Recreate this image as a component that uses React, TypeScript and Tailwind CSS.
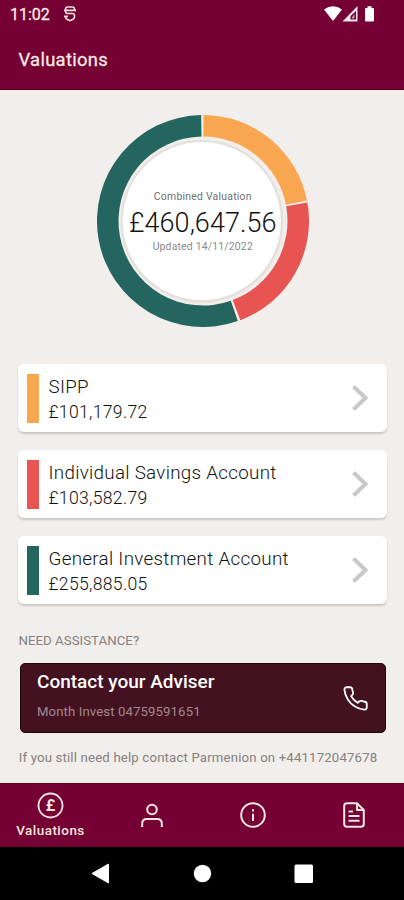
import React from "react";

const CX = 106;
const CY = 106;

function point(deg: number, r: number) {
  const a = (deg * Math.PI) / 180;
  return `${(CX + r * Math.sin(a)).toFixed(2)} ${(CY - r * Math.cos(a)).toFixed(2)}`;
}

function arc(from: number, to: number) {
  const large = to - from > 180 ? 1 : 0;
  return `M${point(from, 106)} A106 106 0 ${large} 1 ${point(to, 106)} L${point(to, 84.5)} A84.5 84.5 0 ${large} 0 ${point(from, 84.5)} Z`;
}

function Donut() {
  return (
    <div className="relative left-[0.8px] mx-auto mt-[24.5px] h-[212px] w-[212px]">
      <svg width="212" height="212" viewBox="0 0 212 212" className="block">
        <path d={arc(0.3, 78.9)} fill="#f9a650" />
        <path d={arc(79.9, 159.4)} fill="#e85452" />
        <path d={arc(160.8, 359)} fill="#24665f" />
        <circle cx="105" cy="106.3" r="81.5" fill="#e6e0dd" />
        <circle cx="104.8" cy="106" r="79" fill="#fff" />
      </svg>
      <div className="absolute inset-0 flex flex-col items-center whitespace-nowrap pt-[74px]">
        <div className="h-4 text-[10.4px] leading-4 tracking-[0.25px] text-[#707070]">Combined Valuation</div>
        <div className="mt-[2px] h-8 text-[27px] font-light leading-8 tracking-[0.05px] text-[#111]">£460,647.56</div>
        <div className="h-4 text-[10.4px] leading-4 tracking-[0.2px] text-[#8a8a8a]">Updated 14/11/2022</div>
      </div>
    </div>
  );
}

function Account({ name, value, color }: { name: string; value: string; color: string }) {
  return (
    <div className="flex h-[68px] items-center rounded-[6px] bg-white pl-[9px] pr-[18px] shadow-[0_2px_2px_rgba(0,0,0,0.16)]">
      <div className={`h-[49px] w-3 ${color}`} />
      <div className="ml-[9.5px] flex-1 whitespace-nowrap pt-[4px] font-light text-[#111]">
        <div className="h-[25px] text-[18.8px] leading-[25px] tracking-[0.3px]">{name}</div>
        <div className="h-[25px] text-[17.6px] leading-[25px] tracking-[0.3px]">{value}</div>
      </div>
      <svg width="17" height="28" viewBox="0 0 17 28" fill="none" stroke="#c8c8c8" strokeWidth="4">
        <path d="M1.5 2.5 13.5 14 1.5 25.5" />
      </svg>
    </div>
  );
}

export default function App() {
  return (
    <div className="flex h-[900px] w-[404px] flex-col overflow-hidden bg-[#f1eeeb] font-['Roboto',sans-serif]">
      <header className="h-[90px] shrink-0 border-b border-[#5a0012] bg-[#750034] text-[#f7e9e1]">
        <div className="flex h-7 items-center pl-[10px] pr-[29.5px]">
          <span className="mt-[2px] text-[16px] leading-5 [-webkit-text-stroke:0.3px]">11:02</span>
          <svg className="ml-[14px]" width="12" height="16" viewBox="0 0 12 16" fill="none" stroke="#f3dfdc" strokeWidth="1.6">
            <path d="M10.5 4V3.2Q10.5 1 8.3 1H3.7Q1.5 1 1.5 3.2V5.3Q1.5 7.5 3.7 7.5H8.3Q10.5 7.5 10.5 9.7V11Q10.5 12.5 9 13.2L6 14.7 3 13.2Q1.5 12.5 1.5 11M0 4.4H12M0 10.4H4" />
          </svg>
          <svg className="ml-auto" width="51" height="16" viewBox="0 0 51 16">
            <path d="M0 3.5Q9-3 18 3.5L9 15Z" fill="#fff" />
            <path d="M33.5 0V15.5H18.5Z" fill="#f6e6ea" />
            <path d="M32 5V13.5H26.5V10Z" fill="#750034" />
            <path d="M30.5 8V12.5H28V11Z" fill="#c390a4" />
            <path d="M42 2H43.5V.3H47.5V2H49Q50 2 50 3V14.5Q50 15.5 49 15.5H42Q41 15.5 41 14.5V3Q41 2 42 2Z" fill="#fff" />
          </svg>
        </div>
        <div className="ml-[18.5px] mt-[20px] text-[18.4px] leading-6 tracking-[0.3px] [-webkit-text-stroke:0.3px]">Valuations</div>
      </header>

      <main className="flex-1 px-[18px]">
        <Donut />
        <div className="mr-[-1px] mt-[37.5px] flex flex-col gap-[18px]">
          <Account name="SIPP" value="£101,179.72" color="bg-[#f9a650]" />
          <Account name="Individual Savings Account" value="£103,582.79" color="bg-[#e85452]" />
          <Account name="General Investment Account" value="£255,885.05" color="bg-[#24665f]" />
        </div>
        <div className="ml-[0.5px] mt-[27px] h-5 whitespace-nowrap text-[13.3px] leading-5 text-[#85817f]">NEED ASSISTANCE?</div>
        <div className="ml-[2px] mt-3 flex h-[70px] rounded-[5px] border border-[#1e0610] bg-[#43111f] pl-4 pr-[16px]">
          <div className="flex-1 whitespace-nowrap pt-[6px]">
            <div className="h-6 text-[19px] font-medium leading-6 text-white">Contact your Adviser</div>
            <div className="mt-[8px] h-5 text-[13.2px] leading-5 tracking-[0.1px] text-[#a18991]">Month Invest 04759591651</div>
          </div>
          <svg className="mt-[21px]" width="27" height="27" viewBox="0 0 24 24" fill="none" stroke="#fff" strokeWidth="1.6" strokeLinejoin="round">
            <path d="M22 16.92v3a2 2 0 0 1-2.18 2 19.79 19.79 0 0 1-8.63-3.07 19.5 19.5 0 0 1-6-6 19.79 19.79 0 0 1-3.07-8.67A2 2 0 0 1 4.11 2h3a2 2 0 0 1 2 1.72c.127.96.361 1.903.7 2.81a2 2 0 0 1-.45 2.11L8.09 9.91a16 16 0 0 0 6 6l1.27-1.27a2 2 0 0 1 2.11-.45c.907.339 1.85.573 2.81.7A2 2 0 0 1 22 16.92z" />
          </svg>
        </div>
        <div className="ml-[0.7px] mt-[15px] h-5 whitespace-nowrap text-[13.2px] leading-5 tracking-[0.17px] text-[#85817f]">
          If you still need help contact Parmenion on +441172047678
        </div>
      </main>

      <nav className="grid h-[64px] shrink-0 grid-cols-4 border-t border-[#5a0012] bg-[#750034] text-[#f9e7df]">
        <div className="flex flex-col items-center pt-2">
          <svg width="27" height="27" viewBox="0 0 27 27">
            <circle cx="13.5" cy="13.5" r="12" fill="none" stroke="currentColor" strokeWidth="1.8" />
            <text x="13.5" y="19.2" textAnchor="middle" fontSize="16" fontWeight="700" fontFamily="Roboto" fill="currentColor">£</text>
          </svg>
          <span className="mt-[3px] text-[13.4px] font-medium leading-[18px] tracking-[0.5px]">Valuations</span>
        </div>
        <div className="flex items-center justify-center pb-px">
          <svg width="22" height="25" viewBox="0 0 22 25" fill="none" stroke="currentColor" strokeWidth="2">
            <circle cx="11" cy="6.5" r="4.8" />
            <path d="M1.2 24V20.5Q1.2 16 5.7 16H16.3Q20.8 16 20.8 20.5V24" />
          </svg>
        </div>
        <div className="flex items-center justify-center pb-0.5">
          <svg width="26" height="26" viewBox="0 0 26 26" fill="none" stroke="currentColor" strokeWidth="2">
            <circle cx="13" cy="13" r="11.8" />
            <path d="M13 7.2V9.4M13 11.8V19" />
          </svg>
        </div>
        <div className="flex items-center justify-center pb-0.5">
          <svg width="22" height="26" viewBox="0 0 22 26" fill="none" stroke="currentColor" strokeWidth="2" strokeLinejoin="round">
            <path d="M14 1.2H4Q1.2 1.2 1.2 4V22Q1.2 24.8 4 24.8H18Q20.8 24.8 20.8 22V8ZM14 1.2V8H20.8M5.5 9.5H10M5.5 14H16.5M5.5 18.7H16.5" />
          </svg>
        </div>
      </nav>
      <div className="h-[53px] shrink-0 bg-black">
        <svg className="block" width="404" height="53" viewBox="0 0 404 53" fill="#fff">
          <path d="M92 26.5 108.5 17V36Z" stroke="#fff" strokeLinejoin="round" />
          <circle cx="202.5" cy="26.5" r="8.7" />
          <rect x="294.5" y="17.5" width="18.5" height="18.5" rx="1.5" />
        </svg>
      </div>
    </div>
  );
}
